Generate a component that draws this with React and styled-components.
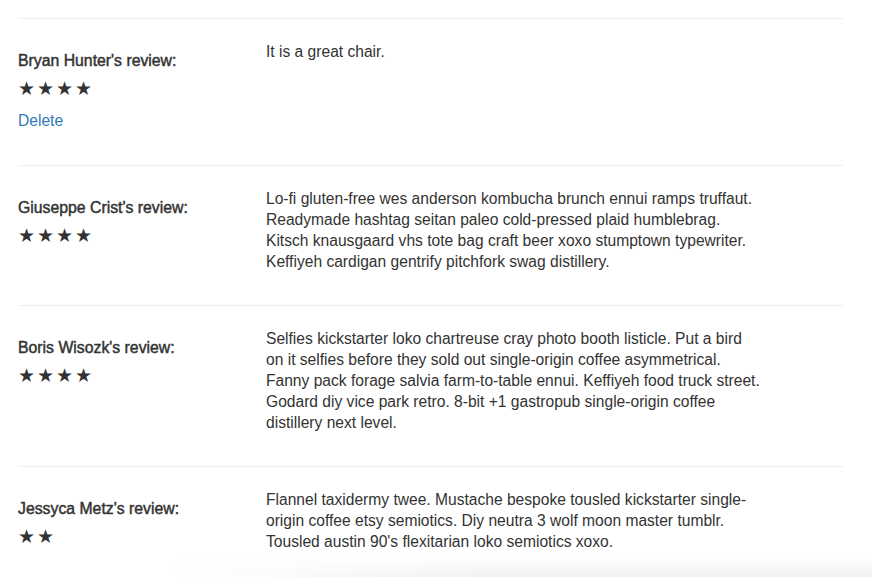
import React from "react";
import styled, { createGlobalStyle } from "styled-components";

const Global = createGlobalStyle`
  html, body {
    margin: 0;
    padding: 0;
    background: #fff;
  }
  body {
    font-family: "Liberation Sans", Arial, sans-serif;
    font-size: 15.6px;
    color: #333;
  }
`;

const Page = styled.div`
  padding: 18px 0 0 18px;
  width: 825px;
`;

const Row = styled.div`
  display: grid;
  grid-template-columns: 248px 1fr;
  border-top: 1px solid #eee;
  padding: 22px 0 33px;
`;

const Side = styled.div`
  display: flex;
  flex-direction: column;
  align-items: flex-start;
`;

const Name = styled.div`
  margin-top: 10px;
  line-height: 20px;
  font-weight: normal;
  font-size: 15.8px;
  color: #333;
  -webkit-text-stroke: 0.45px #333;
`;

const Stars = styled.div`
  display: flex;
  margin-top: 7px;
  height: 20px;
  align-items: center;
`;

const Star = styled.span`
  width: 19px;
  font-family: "DejaVu Sans", sans-serif;
  font-size: 19px;
  line-height: 20px;
  color: #333;
`;

const Delete = styled.a`
  margin-top: 12px;
  line-height: 22px;
  color: #337ab7;
  text-decoration: none;
  cursor: pointer;
`;

const Body = styled.p`
  margin: 0;
  line-height: 21px;
  white-space: nowrap;
`;

const Fade = styled.div`
  position: fixed;
  left: 0;
  right: 0;
  bottom: 0;
  height: 20px;
  pointer-events: none;
  background: linear-gradient(to right, rgba(255,255,255,1) 20%, rgba(255,255,255,0) 60%),
    linear-gradient(to bottom, rgba(240,240,240,0), rgba(238,238,238,0.9));
`;

const reviews = [
  {
    name: "Bryan Hunter",
    stars: 4,
    canDelete: true,
    lines: ["It is a great chair."],
  },
  {
    name: "Giuseppe Crist",
    stars: 4,
    lines: [
      "Lo-fi gluten-free wes anderson kombucha brunch ennui ramps truffaut.",
      "Readymade hashtag seitan paleo cold-pressed plaid humblebrag.",
      "Kitsch knausgaard vhs tote bag craft beer xoxo stumptown typewriter.",
      "Keffiyeh cardigan gentrify pitchfork swag distillery.",
    ],
  },
  {
    name: "Boris Wisozk",
    stars: 4,
    lines: [
      "Selfies kickstarter loko chartreuse cray photo booth listicle. Put a bird",
      "on it selfies before they sold out single-origin coffee asymmetrical.",
      "Fanny pack forage salvia farm-to-table ennui. Keffiyeh food truck street.",
      "Godard diy vice park retro. 8-bit +1 gastropub single-origin coffee",
      "distillery next level.",
    ],
  },
  {
    name: "Jessyca Metz",
    stars: 2,
    lines: [
      "Flannel taxidermy twee. Mustache bespoke tousled kickstarter single-",
      "origin coffee etsy semiotics. Diy neutra 3 wolf moon master tumblr.",
      "Tousled austin 90's flexitarian loko semiotics xoxo.",
    ],
  },
];

function Review({ review }) {
  return (
    <Row>
      <Side>
        <Name>{review.name}'s review:</Name>
        <Stars>
          {Array.from({ length: review.stars }).map((_, i) => (
            <Star key={i}>★</Star>
          ))}
        </Stars>
        {review.canDelete && <Delete>Delete</Delete>}
      </Side>
      <Body>
        {review.lines.map((line, i) => (
          <React.Fragment key={i}>
            {line}
            {i < review.lines.length - 1 && <br />}
          </React.Fragment>
        ))}
      </Body>
    </Row>
  );
}

export default function App() {
  return (
    <>
      <Global />
      <Page>
        {reviews.map((r) => (
          <Review key={r.name} review={r} />
        ))}
      </Page>
      <Fade />
    </>
  );
}
